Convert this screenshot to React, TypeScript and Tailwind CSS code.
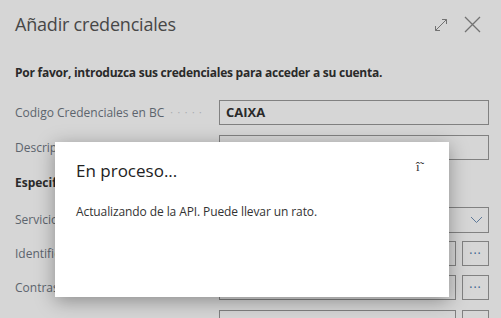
import React from "react";

const labelCls = "w-[204px] shrink-0 truncate text-[12px] text-[#6f7883]";
const boxCls = "h-[25px] border border-[#9a9a9a] bg-white";

function Row({ label, leader, children }: { label: string; leader?: boolean; children: React.ReactNode }) {
  return (
    <div className="flex h-[25px] items-center">
      <div className={`${labelCls} flex items-center gap-[6px] overflow-hidden`}>
        <span className="whitespace-nowrap">{label}</span>
        {leader && (
          <span className="whitespace-nowrap text-[10px] tracking-[1px] text-[#c9cdd2]">· · · · ·</span>
        )}
      </div>
      <div className="flex flex-1 gap-[6px]">{children}</div>
    </div>
  );
}

function Ellipsis({ empty }: { empty?: boolean }) {
  return (
    <div className={`${boxCls} flex w-[27px] shrink-0 items-center justify-center text-[12px] leading-none tracking-[1px] text-[#3d6ea8]`}>
      {empty ? "" : "···"}
    </div>
  );
}

export default function App() {
  return (
    <div
      className="relative h-[318px] w-[501px] overflow-hidden bg-white"
      style={{ fontFamily: '"Open Sans", "Noto Sans", sans-serif' }}
    >
      {/* back dialog */}
      <div className="pl-[15px] pr-[12px]">
        <div className="flex h-[48px] items-center justify-between pt-[1px]">
          <h1 className="text-[18px] tracking-[-0.2px] text-[#555]">Añadir credenciales</h1>
          <div className="flex items-center gap-[16px] pr-[8px] text-[#888]">
            <svg width="14" height="14" viewBox="0 0 14 14" fill="none" stroke="currentColor" strokeWidth="1">
              <path d="M1.5 12.5 12.5 1.5M8 1.5h4.5V6M1.5 8v4.5H6" />
            </svg>
            <svg width="17" height="17" viewBox="0 0 17 17" fill="none" stroke="currentColor" strokeWidth="1.3">
              <path d="M1 1 16 16M16 1 1 16" />
            </svg>
          </div>
        </div>
        <p className="mt-[16px] text-[12px] font-bold tracking-[-0.25px] text-[#333]">
          Por favor, introduzca sus credenciales para acceder a su cuenta.
        </p>
        <div className="mt-[18px] flex flex-col gap-[10px]">
          <Row label="Codigo Credenciales en BC" leader>
            <div className={`${boxCls} flex flex-1 items-center px-[6px] text-[13px] font-bold text-[#333]`}>CAIXA</div>
          </Row>
          <Row label="Descripción">
            <div className={`${boxCls} flex-1`} />
          </Row>
        </div>
        <p className="mt-[10px] h-[26px] text-[12px] font-bold leading-[26px] text-[#333]">Especificaciones</p>
        <div className="mt-[11px] flex flex-col gap-[9px]">
          <Row label="Servicio">
            <div className={`${boxCls} flex h-[26px] flex-1 items-center justify-end pr-[5px] text-[#6f8fb5]`}>
              <svg width="13" height="8" viewBox="0 0 13 8" fill="none" stroke="currentColor" strokeWidth="1">
                <path d="M1 1l5.5 5.5L12 1" />
              </svg>
            </div>
          </Row>
          <Row label="Identificador">
            <div className={`${boxCls} flex-1`} />
            <Ellipsis />
          </Row>
          <Row label="Contraseña">
            <div className={`${boxCls} flex-1`} />
            <Ellipsis />
          </Row>
          <div className="mt-[1px] flex h-[25px]">
            <div className="w-[204px] shrink-0" />
            <div className="flex flex-1 gap-[6px]">
              <div className={`${boxCls} flex-1`} />
              <Ellipsis empty />
            </div>
          </div>
        </div>
      </div>

      {/* dim overlay */}
      <div className="absolute inset-0 bg-black/[0.16]" />

      {/* progress dialog */}
      <div className="absolute left-[55px] top-[142px] h-[155px] w-[394px] bg-white px-[21px] shadow-[0_4px_18px_rgba(0,0,0,0.35)]">
        <div className="flex h-[55px] items-center justify-between pt-[2px]">
          <h2 className="text-[17px] text-[#222]">En proceso...</h2>
          <span
            className="mr-[4px] -translate-y-[4px] text-[13px] leading-none text-[#333]"
            style={{ fontFamily: '"Liberation Serif", serif' }}
          >
            î˜
          </span>
        </div>
        <p className="mt-[6px] text-[12px] tracking-[-0.1px] text-[#333]">
          Actualizando de la API. Puede llevar un rato.
        </p>
      </div>
    </div>
  );
}
